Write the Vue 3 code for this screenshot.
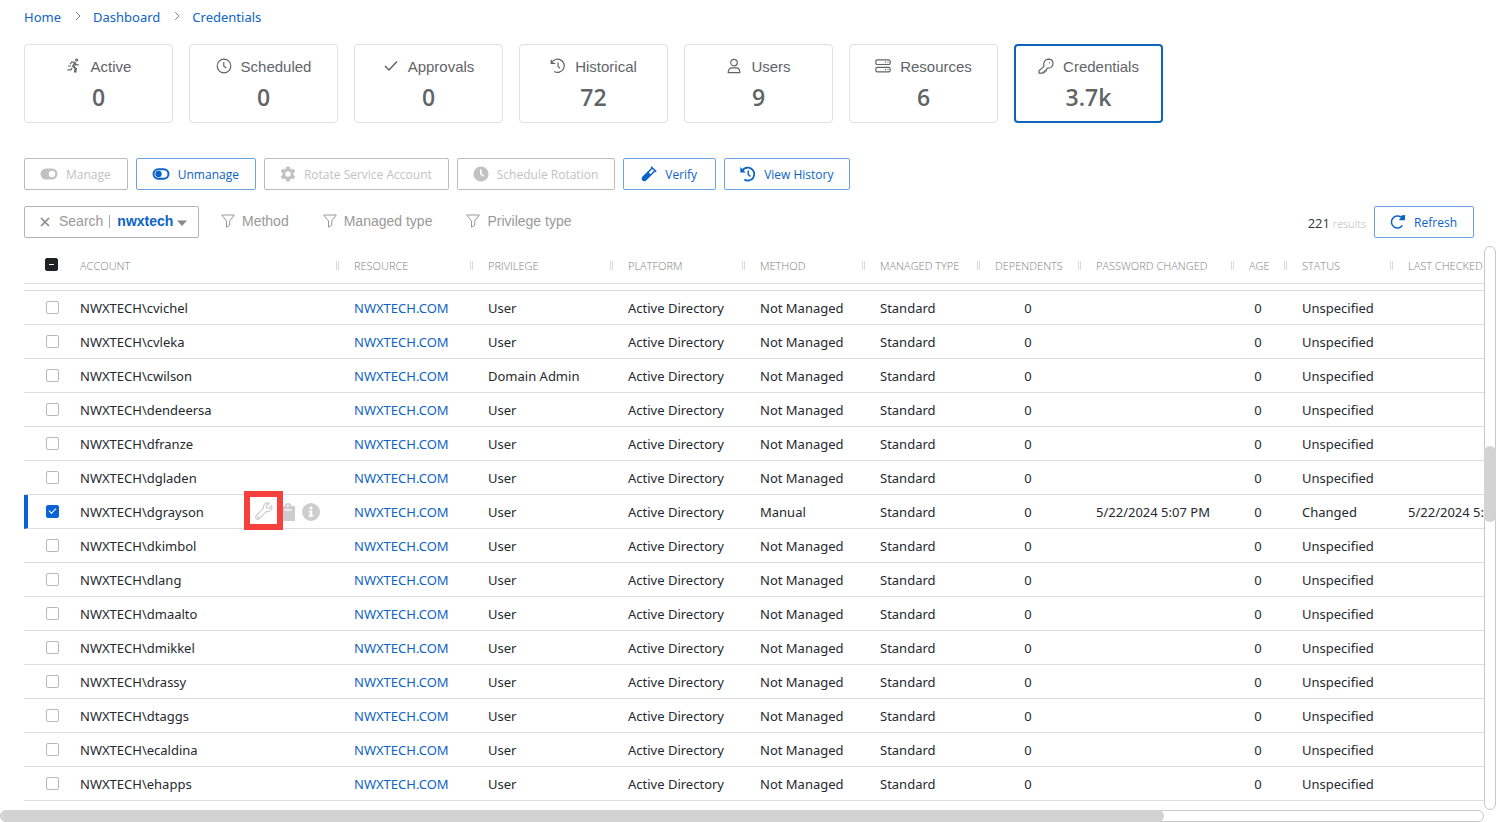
<script setup>
import { ref } from 'vue'

const crumbs = ['Home', 'Dashboard', 'Credentials']

const cards = [
  { icon: 'run', label: 'Active', value: '0' },
  { icon: 'clock', label: 'Scheduled', value: '0' },
  { icon: 'check', label: 'Approvals', value: '0' },
  { icon: 'history', label: 'Historical', value: '72' },
  { icon: 'user', label: 'Users', value: '9' },
  { icon: 'server', label: 'Resources', value: '6' },
  { icon: 'key', label: 'Credentials', value: '3.7k', active: true },
]

const filters = ['Method', 'Managed type', 'Privilege type']

const columns = [
  { key: 'account', label: 'Account' },
  { key: 'resource', label: 'Resource' },
  { key: 'privilege', label: 'Privilege' },
  { key: 'platform', label: 'Platform' },
  { key: 'method', label: 'Method' },
  { key: 'type', label: 'Managed Type' },
  { key: 'dependents', label: 'Dependents' },
  { key: 'changed', label: 'Password Changed' },
  { key: 'age', label: 'Age' },
  { key: 'status', label: 'Status' },
  { key: 'checked', label: 'Last Checked' },
]

const names = ['cvichel', 'cvleka', 'cwilson', 'dendeersa', 'dfranze', 'dgladen', 'dgrayson', 'dkimbol',
  'dlang', 'dmaalto', 'dmikkel', 'drassy', 'dtaggs', 'ecaldina', 'ehapps']

const rows = ref(names.map((name) => {
  const managed = name === 'dgrayson'
  return {
    account: 'NWXTECH\\' + name,
    privilege: name === 'cwilson' ? 'Domain Admin' : 'User',
    method: managed ? 'Manual' : 'Not Managed',
    changed: managed ? '5/22/2024 5:07 PM' : '',
    status: managed ? 'Changed' : 'Unspecified',
    checked: managed ? '5/22/2024 5:07 PM' : '',
    selected: managed,
  }
}))
</script>

<template>
  <div class="page">
    <nav class="crumbs" aria-label="Breadcrumb">
      <template v-for="(crumb, i) in crumbs" :key="crumb">
        <svg v-if="i" class="chevron" viewBox="0 0 6 10"><path d="M1 1l4 4-4 4" /></svg>
        <a href="#">{{ crumb }}</a>
      </template>
    </nav>

    <div class="cards">
      <button v-for="card in cards" :key="card.label" type="button" class="card" :class="{ active: card.active }">
        <span class="card-label">
          <svg class="icon line" viewBox="0 0 16 16">
            <template v-if="card.icon === 'run'">
              <circle cx="10.7" cy="2" r="1" />
              <path d="M4.2 6.2L5.6 4l3.2.2-2.2 4.2 2.5 2-.6 4M8.800 4.200l1.500 2.500 2.500.2M6.200 9.800l-1.300 2H1.500M10 5L8 8.800l2.300 1.800-.6 4M2 8h3" />
            </template>
            <template v-else-if="card.icon === 'clock'">
              <circle cx="8" cy="8" r="6.8" /><path d="M7.8 4v4.3l2.6 1.8" />
            </template>
            <path v-else-if="card.icon === 'check'" class="thick" d="M2 8l4 4 8-8.5" />
            <template v-else-if="card.icon === 'history'">
              <path d="M1.2 1.8v3.5h4M1.6 5A6.6 6.6 0 1 1 4.2 13.4" /><path d="M8 4.6v3.8l2 2" />
            </template>
            <template v-else-if="card.icon === 'user'">
              <circle cx="8" cy="4.6" r="3.3" /><path d="M2.2 14.6c0-3 1.6-4.7 3.6-4.7h4.4c2 0 3.6 1.7 3.6 4.7z" />
            </template>
            <template v-else-if="card.icon === 'server'">
              <rect x=".8" y="1.9" width="14.4" height="4.6" rx="1.6" /><rect x=".8" y="9.3" width="14.4" height="4.6" rx="1.6" />
              <path d="M10 4.2h1M12.5 4.2h1M10 11.6h1M12.5 11.6h1" />
            </template>
            <template v-else>
              <path d="M6 8.4C4.9 5 6.7 1.2 10.3 1.1c2.7 0 4.7 1.8 4.7 4.4 0 3.2-2.6 5-5.4 4.6L8.2 11.5v1.4H6.7v1.3H5.1v.9H1v-2.3z" />
              <path d="M11 4.9h1" />
            </template>
          </svg>
          {{ card.label }}
        </span>
        <span class="card-value">{{ card.value }}</span>
      </button>
    </div>

    <div class="toolbar">
      <button type="button" class="btn" disabled>
        <svg class="tool-icon wide" viewBox="0 0 18 16"><path fill-rule="evenodd" d="M6 2.5h6a5.5 5.5 0 0 1 0 11H6a5.5 5.5 0 0 1 0-11zm6 2.3a3.2 3.2 0 1 0 0 6.4 3.2 3.2 0 0 0 0-6.4z" /></svg>
        Manage
      </button>
      <button type="button" class="btn">
        <svg class="tool-icon wide" viewBox="0 0 18 16"><rect x="1.5" y="3.2" width="15" height="9.6" rx="4.8" class="ring" /><circle cx="6.5" cy="8" r="3.2" /></svg>
        Unmanage
      </button>
      <button type="button" class="btn" disabled>
        <svg class="tool-icon" viewBox="0 0 16 16"><path fill-rule="evenodd" d="M6.4.5h3.2l.5 2.2 1.3.8 2.2-.7 1.6 2.8-1.7 1.5v1.8l1.7 1.5-1.6 2.8-2.2-.7-1.3.8-.5 2.2H6.4l-.5-2.2-1.3-.8-2.2.7-1.6-2.8 1.7-1.5V7.1L.8 5.6l1.6-2.8 2.2.7 1.3-.8zM8 5.3a2.7 2.7 0 1 0 0 5.4 2.7 2.7 0 0 0 0-5.400z" /></svg>
        Rotate Service Account
      </button>
      <button type="button" class="btn" disabled>
        <svg class="tool-icon" viewBox="0 0 16 16"><path fill-rule="evenodd" d="M8 .4a7.6 7.6 0 1 1 0 15.2A7.6 7.6 0 0 1 8 .4zM7 3.5v5l3.3 2.3.9-1.3-2.5-1.7V3.5z" /></svg>
        Schedule Rotation
      </button>
      <button type="button" class="btn verify">
        <svg class="tool-icon" viewBox="0 0 16 16"><path fill-rule="evenodd" d="M10.6.3l5.1 5-1 1-.7-.6-8.6 8.6c-1.2 1.2-3 1.2-4 .1-1-1-1-2.8.1-4L10.2 2 9.6 1.3zm.7 2.8L7.800 6.600l1.700 1.700 3.400-3.500z" /></svg>
        Verify
      </button>
      <button type="button" class="btn">
        <svg class="tool-icon" viewBox="0 0 16 16"><path class="stroke" d="M2.4 4.5A6.5 6.5 0 1 1 4.3 13.6" /><path d="M.3 1v5.4h5.4z" /><path class="stroke thin" d="M8.3 4.5v4l2.2 2" /></svg>
        View History
      </button>
    </div>

    <div class="filters">
      <button type="button" class="search">
        <svg class="clear" viewBox="0 0 10 10"><path d="M1 1l8 8M9 1L1 9" /></svg>
        <span>Search</span><i class="bar"></i><b>nwxtech</b>
        <svg class="caret" viewBox="0 0 10 6"><path d="M0 .5h10L5 6z" /></svg>
      </button>
      <button v-for="filter in filters" :key="filter" type="button" class="filter">
        <svg class="funnel" viewBox="0 0 14 14"><path d="M.7 1h12.6L8.7 7v4.200l-3.200 2V7z" /></svg>
        {{ filter }}
      </button>
      <span class="results"><strong>221</strong> results</span>
      <button type="button" class="btn">
        <svg class="tool-icon" viewBox="0 0 16 16"><path class="stroke thin" d="M12.3 11.5A6 6 0 1 1 11 3.2" /><path d="M9.2 6.2l.6-1.6 1-.6.3-2.6L15.2 1l-.4 5.2z" /></svg>
        Refresh
      </button>
    </div>

    <div class="grid">
      <div class="viewport">
        <table>
          <colgroup><col class="c-select"><col v-for="c in columns" :key="c.key" :class="'c-' + c.key"></colgroup>
          <thead>
            <tr>
              <th class="select"><input type="checkbox" class="partial" aria-label="Select all"></th>
              <th v-for="c in columns" :key="c.key" scope="col">{{ c.label }}</th>
            </tr>
          </thead>
          <tbody>
            <tr class="clipped"><td colspan="12"></td></tr>
            <tr v-for="row in rows" :key="row.account" :class="{ selected: row.selected }">
              <td class="select"><input v-model="row.selected" type="checkbox" :aria-label="'Select ' + row.account"></td>
              <td class="account">
                {{ row.account }}
                <span v-if="row.status === 'Changed'" class="actions">
                  <button type="button" aria-label="Copy">
                    <svg viewBox="0 0 18 18"><path fill-rule="evenodd" d="M3 3h3a3 3 0 0 1 6 0h3c.6 0 1 .4 1 1v13c0 .6-.4 1-1 1H3c-.6 0-1-.4-1-1V4c0-.6.4-1 1-1zm6-1.2a1 1 0 1 0 0 2 1 1 0 0 0 0-2zM5.500 6.200v1.200h7V6.200z" /></svg>
                  </button>
                  <button type="button" aria-label="Information">
                    <svg viewBox="0 0 18 18"><path fill-rule="evenodd" d="M9 0a9 9 0 1 1 0 18A9 9 0 0 1 9 0zm0 3.5a1.6 1.6 0 1 0 0 3.2 1.6 1.6 0 0 0 0-3.2zM6.700 7.700v1.500h1v3h-1v1.600h4.600v-1.600h-1V7.700z" /></svg>
                  </button>
                  <button type="button" class="wrench" aria-label="Manage">
                    <svg viewBox="0 0 18 18"><path d="M16.7 3.7l-2.8 2.8-2.1-.4-.4-2.1 2.8-2.8C10.9.1 7.7 2.7 8.5 6.4L1.3 13.5c-.9.9-.9 2.2-.1 3 .8.9 2.3.9 3.1 0l7.200-7.100c3.500.8 6.300-2.300 5.200-5.700z" /><circle cx="2.900" cy="15" r=".4" /></svg>
                  </button>
                </span>
              </td>
              <td><a href="#">NWXTECH.COM</a></td>
              <td>{{ row.privilege }}</td>
              <td>Active Directory</td>
              <td>{{ row.method }}</td>
              <td>Standard</td>
              <td class="num">0</td>
              <td>{{ row.changed }}</td>
              <td class="num">0</td>
              <td>{{ row.status }}</td>
              <td>{{ row.checked }}</td>
            </tr>
          </tbody>
        </table>
      </div>
      <div class="vscroll"><div class="vthumb"></div></div>
    </div>
    <div class="hscroll"><div class="hthumb"></div></div>
  </div>
</template>

<style>
body {
  margin: 0;
  background: #fff;
}
</style>

<style scoped>
.page {
  display: flex;
  flex-direction: column;
  height: 100vh;
  overflow: hidden;
  box-sizing: border-box;
  color: #24292e;
  font: 13px/18px "Noto Sans", "Open Sans", sans-serif;
}
.page * { box-sizing: border-box; }
button { font: inherit; background: #fff; cursor: pointer; }
button:disabled { cursor: default; }
a { color: #0e64c4; text-decoration: none; }
svg { display: block; flex: none; }

.crumbs { display: flex; align-items: center; padding: 8px 24px 0; }
.chevron { width: 6px; height: 10px; margin: 0 12px 2px 14px; fill: none; stroke: #888; }

.cards { display: flex; gap: 16px; padding: 18px 24px 0; }
.card {
  width: 149px;
  height: 79px;
  padding: 0;
  display: flex;
  flex-direction: column;
  align-items: center;
  border: 1px solid #e0e0e0;
  border-radius: 4px;
  color: #616467;
}
.card.active { border: 2px solid #0e64b8; }
.card-label {
  display: flex;
  align-items: center;
  gap: 9px;
  margin-top: 12px;
  font: 15px/20px "Liberation Sans", Arial, sans-serif;
}
.card.active .card-label { margin-top: 11px; }
.card-value { margin-top: 4px; font: 600 23px/32px "Open Sans", "Noto Sans", sans-serif; }
.icon { width: 16px; height: 16px; margin-bottom: 2px; }
.line { fill: none; stroke: #616467; stroke-width: 1.2; }
.thick { stroke-width: 1.5; }

.toolbar { display: flex; gap: 8px; padding: 35px 24px 0; }
.btn {
  display: flex;
  align-items: center;
  gap: 8px;
  height: 32px;
  padding: 1px 16px 0 15px;
  border: 1px solid #6ba4e0;
  border-radius: 2px;
  color: #0b62c6;
  font: 12px/18px "Open Sans", "Noto Sans", sans-serif;
  white-space: nowrap;
}
.btn:disabled { border-color: #bdbdbd; color: #c2c2c2; }
.btn.verify { padding: 1px 18px 0 17px; }
.tool-icon { width: 16px; height: 16px; margin-bottom: 1px; fill: currentColor; }
.tool-icon.wide { width: 18px; }
.ring { fill: none; stroke: currentColor; stroke-width: 2; }
.stroke { fill: none; stroke: currentColor; stroke-width: 1.8; }
.stroke.thin { stroke-width: 1.5; }

.filters {
  display: flex;
  align-items: center;
  padding: 16px 22px 0 24px;
  color: #999;
  font: 14px/18px "Liberation Sans", Arial, sans-serif;
}
.search {
  display: flex;
  align-items: center;
  width: 175px;
  height: 32px;
  padding: 0 11px 2px 15px;
  border: 1px solid #b4b4b4;
  border-radius: 2px;
  color: #999;
}
.clear { width: 10px; height: 10px; margin: 2px 9px 0 0; stroke: #888; stroke-width: 1.6; }
.bar { width: 1px; height: 13px; margin: 0 7px 0 6px; background: #aaa; }
.search b { color: #0b62c6; }
.caret { width: 10px; height: 6px; margin: 3px 0 0 auto; fill: #888; }
.filter {
  display: flex;
  align-items: center;
  gap: 7px;
  height: 32px;
  padding: 0 0 2px;
  margin-left: 22px;
  border: 0;
  color: #999;
}
.filter + .filter { margin-left: 34px; }
.funnel { width: 14px; height: 14px; fill: none; stroke: #999; }
.results {
  margin: 2px 8px 0 auto;
  color: #b8b8b8;
  font: 300 11px/18px "Open Sans", "Noto Sans", sans-serif;
}
.results strong { color: #333; font-weight: 400; font-size: 13px; }

.grid { display: flex; flex: 1; min-height: 0; margin-top: 8px; }
.viewport { flex: 1; min-width: 0; margin-left: 24px; padding-top: 2px; overflow: hidden; }
table { width: 1526px; table-layout: fixed; border-spacing: 0; }
.c-select { width: 48px; }
.c-account { width: 274px; }
.c-resource { width: 134px; }
.c-privilege { width: 140px; }
.c-platform { width: 132px; }
.c-method { width: 120px; }
.c-type { width: 115px; }
.c-dependents { width: 101px; }
.c-changed { width: 153px; }
.c-age { width: 53px; }
.c-status { width: 106px; }
.c-checked { width: 150px; }
th, td {
  padding: 0 27px 0 8px;
  border-bottom: 1px solid #dedede;
  text-align: left;
  vertical-align: middle;
  white-space: nowrap;
}
th {
  position: relative;
  height: 36px;
  color: #808080;
  font: 300 11px/18px "Open Sans", "Noto Sans", sans-serif;
  text-transform: uppercase;
}
th:not(.select, :last-child)::after {
  content: "";
  position: absolute;
  right: 7px;
  top: 13px;
  width: 3px;
  height: 9px;
  box-sizing: border-box;
  border: solid #dadada;
  border-width: 0 1px;
}
td { height: 34px; }
.clipped td { height: 7px; }
.num { text-align: center; }
.select { padding: 0 0 0 22px; }
th.select { padding-left: 21px; }
.selected .select { padding-left: 18px; border-left: 4px solid #0b62d6; }
input {
  display: block;
  position: relative;
  appearance: none;
  width: 13px;
  height: 13px;
  margin: 0;
  border: 1px solid #b8b8b8;
  border-radius: 2px;
  background: #fff;
}
th input { margin-bottom: 2px; }
input:checked { border-color: #0b62d6; background: #0b62d6; }
input:checked::after {
  content: "";
  position: absolute;
  left: 2px;
  top: 2px;
  width: 6px;
  height: 3px;
  border: solid #fff;
  border-width: 0 0 1px 1px;
  transform: rotate(-45deg);
}
input.partial { border-color: #202124; background: #202124; }
input.partial::after {
  content: "";
  position: absolute;
  left: 3px;
  top: 5px;
  width: 5px;
  height: 1px;
  background: #fff;
}
.account { position: relative; }
.actions {
  position: absolute;
  top: 8px;
  left: 207px;
  display: flex;
  gap: 5px;
}
.actions button { width: 18px; height: 18px; padding: 0; border: 0; background: none; }
.actions svg { width: 18px; height: 18px; fill: #cdcdcd; }
.actions .wrench {
  position: absolute;
  top: -12px;
  left: -35px;
  width: 39px;
  height: 39px;
  padding: 5px;
  border: 6px solid #f5403d;
  background: #fff;
}
.actions .wrench svg { fill: none; stroke: #cdcdcd; stroke-width: 1.2; }

.vscroll {
  width: 12px;
  padding-top: 199px;
  border: 1px solid #c8c8c8;
  border-radius: 6px;
}
.vthumb { width: 12px; height: 76px; margin-left: -1px; border-radius: 6px; background: #d3d3d3; }
.hscroll { height: 12px; margin-right: 12px; border: 1px solid #c8c8c8; border-radius: 6px; flex: none; }
.hthumb { width: 78.5%; height: 12px; margin-top: -1px; border-radius: 6px; background: #d3d3d3; }
</style>
